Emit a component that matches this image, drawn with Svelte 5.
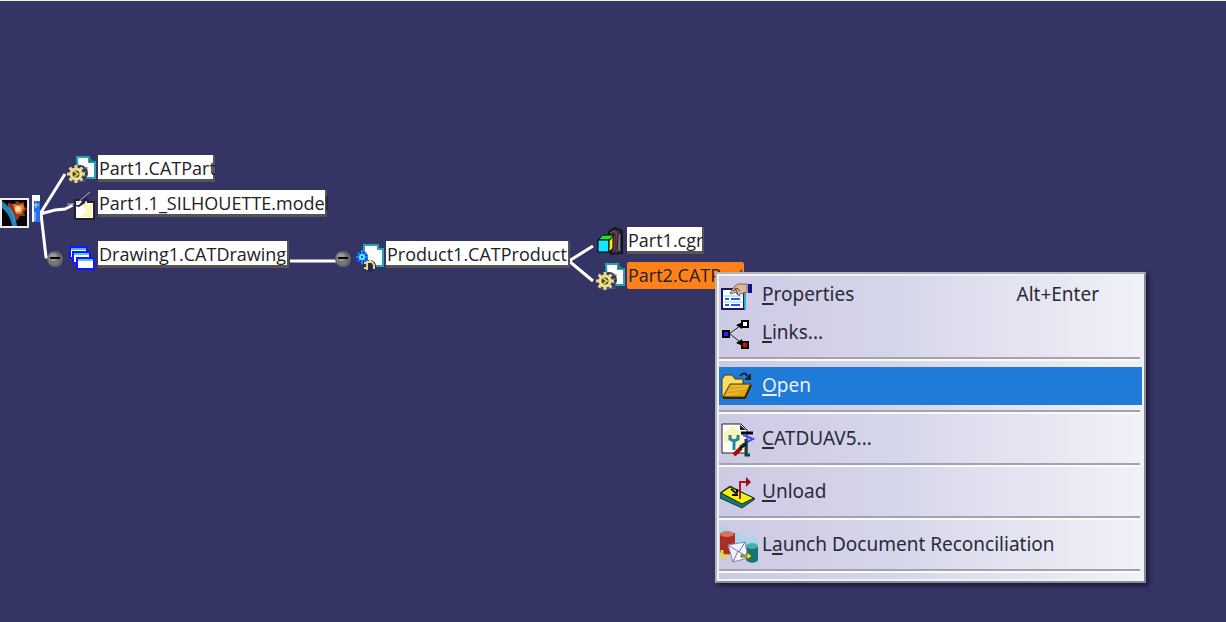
<script>
  const nodes = [
    { label: 'Part1.CATPart', icon: 'part', x: 67, y: 155, w: 117 },
    { label: 'Part1.1_SILHOUETTE.model', icon: 'model', x: 67, y: 190, w: 229 },
    { label: 'Drawing1.CATDrawing', icon: 'drawing', x: 67, y: 241, w: 191 },
    { label: 'Product1.CATProduct', icon: 'product', x: 355, y: 241, w: 184 },
    { label: 'Part1.cgr', icon: 'cgr', x: 596, y: 227, w: 77 },
    { label: 'Part2.CATPart', icon: 'part', x: 596, y: 262, w: 117, selected: true },
  ];
  const groups = [
    [
      { pre: '', key: 'P', rest: 'roperties', icon: 'properties', shortcut: 'Alt+Enter' },
      { pre: '', key: 'L', rest: 'inks...', icon: 'links' },
    ],
    [{ pre: '', key: 'O', rest: 'pen', icon: 'open', active: true }],
    [{ pre: '', key: 'C', rest: 'ATDUAV5...', icon: 'utility' }],
    [{ pre: '', key: 'U', rest: 'nload', icon: 'unload' }],
    [{ pre: 'L', key: 'a', rest: 'unch Document Reconciliation', icon: 'reconcile' }],
  ];
  const hubs = [
    { x: 47, y: 250 },
    { x: 335, y: 250 },
  ];
</script>

{#snippet gear(cx, cy)}
  <g transform="translate({cx} {cy})">
    {#each [0, 45, 90, 135] as a}
      <path d="M0-9V9" stroke="#e8d98a" stroke-width="3" transform="rotate({a})" />
    {/each}
    <circle r="5" fill="#3a3a4a" stroke="#f0df8c" stroke-width="3" />
    <path d="M-2-3L2 0L-2 3" stroke="#d8cf30" stroke-width="2" fill="none" />
  </g>
{/snippet}

{#snippet nodeIcon(name)}
  <svg class="node-icon" viewBox="0 0 30 32" aria-hidden="true">
    {#if name === 'part'}
      <path d="M10 2H22V7H28V23H11Z" fill="#fff" stroke="#22a5b0" stroke-width="2" />
      <path d="M22 2V7H28Z" fill="#187f8c" />
      <circle cx="13" cy="18" r="8" fill="#30305a" />
      <path d="M4 26H19M12 13H21M13 17H21M15 21H20" stroke="#77766f" />
      {@render gear(9, 19)}
    {:else if name === 'model'}
      <path d="M8 10H21V12H27V29H8Z" fill="#fff" stroke="#222" stroke-width="2" />
      <path d="M11 15L20 11V14H25V27H13L20 20Z" fill="#fbf5bb" />
      <path d="M4 15H12L21 4L18 13L12 17Z" fill="#20206f" />
      <path d="M0 14H7M9 14L23 2" stroke="#b9b9d0" stroke-width="1" fill="none" />
    {:else if name === 'drawing'}
      <path d="M3 6H20V17H3Z" fill="#fff" stroke="#1515ff" stroke-width="2" />
      <path d="M4 8H19" stroke="#48b9ff" stroke-width="2" />
      <path d="M6 11H23V22H6Z" fill="#fff" stroke="#1515ff" stroke-width="2" />
      <path d="M7 13H22" stroke="#48c9ff" stroke-width="2" />
      <path d="M10 17H27V28H10Z" fill="#fff" stroke="#1515ff" stroke-width="2" />
      <path d="M11 19H26" stroke="#48c9ff" stroke-width="2" />
    {:else if name === 'product'}
      <path d="M9 4H23V8H28V25H16L9 14Z" fill="#fff" stroke="#22a5b0" stroke-width="2" />
      <circle cx="7" cy="16" r="6" fill="#1636e8" />
      <path d="M7 9V23M1 16H13M3 12L11 20M3 20L11 12" stroke="#158cff" stroke-width="2" />
      <circle cx="7" cy="16" r="2" fill="#061a9a" stroke="#74e6ff" stroke-width="2" />
      <circle cx="15" cy="25" r="6" fill="#28284c" />
      <path d="M9 22H12M12 20V29M12 21H17L19 24V28M9 27H13M15 19V22" stroke="#e8d58b" stroke-width="2" fill="none" />
    {:else if name === 'cgr'}
      <path d="M13 5L19 1L26 4V26L15 27Z" fill="#373444" stroke="#16141c" stroke-width="2" />
      <path d="M14 6L18 4L21 7V25M18 9V22" stroke="#c43a44" stroke-width="1" fill="none" />
      <path d="M22 8L25 5V26L21 23Z" fill="#6c6d8c" stroke="#111" />
      <path d="M2 13L7 8H18L14 13Z" fill="#18e327" stroke="#000" />
      <path d="M2 13H13V25H2Z" fill="#17e5ff" stroke="#000" stroke-width="1" />
      <path d="M13 14L17 9V21L13 25Z" fill="#f6e51b" stroke="#000" />
    {/if}
  </svg>
{/snippet}

{#snippet menuIcon(name)}
  <svg class="menu-icon" viewBox="0 0 40 38" aria-hidden="true">
    {#if name === 'properties'}
      <path d="M2 13H24V33H2Z" fill="#fff" stroke="#171969" stroke-width="2" />
      <path d="M25 13V33" stroke="#22b6cd" stroke-width="2" />
      <path d="M5 23H9M11 23H20M5 29H9M11 29H20" stroke="#3154f5" stroke-width="2" />
      <path d="M4 20H22M4 26H22" stroke="#6fd8ff" />
      <path d="M10 17L14 11L18 8H27V16L20 18L19 20L15 16L12 18Z" fill="#e0b59c" stroke="#766158" />
      <path d="M13 15L17 12L20 15M15 12L18 18" stroke="#4d3e3b" fill="none" />
      <path d="M28 8H32V17H28Z" fill="#12108b" />
    {:else if name === 'links'}
      <path d="M9 20L24 9M10 20L24 31" stroke="#222" stroke-width="1" />
      <path d="M16 11L23 8L22 15ZM16 29L23 32L22 25Z" fill="#000" />
      <path d="M3 17H9V23H3Z" fill="#2525ff" stroke="#000" stroke-width="2" />
      <path d="M22 7H28V13H22Z" fill="#fff" stroke="#000" stroke-width="2" />
      <path d="M22 28H28V34H22Z" fill="#f00505" stroke="#000" stroke-width="2" />
    {:else if name === 'open'}
      <path d="M2 30V12L5 8H12L15 12H23V30Z" fill="#f8dd6b" stroke="#4d3900" stroke-width="1" />
      <path d="M3 30L10 17H31L25 30Z" fill="#dda51c" stroke="#503500" stroke-width="1" />
      <path d="M3 31H25L31 18" stroke="#352800" stroke-width="2" fill="none" />
      <path d="M11 19H28M8 24L26 21M6 28L19 26" stroke="#f1cb46" stroke-width="1" />
      <path d="M20 9C24 4 27 7 29 12M25 12H30V7" stroke="#182338" stroke-width="2" fill="none" />
    {:else if name === 'utility'}
      <path d="M2 4H21L27 10V33H2Z" fill="#fff" stroke="#222" stroke-width="1" />
      <path d="M4 13L13 5L18 11L24 12V31L18 28L12 20L4 24Z" fill="#fbf5bc" />
      <path d="M10 15V19L14 21L18 19V15M14 21V30" stroke="#27859a" stroke-width="3" fill="none" />
      <path d="M20 5V10H26Z" fill="#222" />
      <path d="M21 13H33" stroke="#05051c" stroke-width="3" />
      <path d="M23 15L33 19L22 25" stroke="#4d43ff" stroke-width="2" fill="none" />
      <path d="M26 19V35H30M20 27L27 23" stroke="#173d40" stroke-width="3" fill="none" />
      <path d="M14 35L21 28" stroke="#a80c08" stroke-width="4" />
      <path d="M20 29L26 24" stroke="#111" stroke-width="2" />
    {:else if name === 'unload'}
      <path d="M0 20L10 13L35 26L22 35L0 25Z" fill="#1b7774" stroke="#143d3b" />
      <path d="M1 20L10 14L34 25L22 31Z" fill="#f8f20a" stroke="#172100" />
      <path d="M11 16L17 21M12 22H18M17 16V20" stroke="#111" stroke-width="2" />
      <path d="M20 26V9H27" stroke="#bb1420" stroke-width="2" fill="none" />
      <path d="M26 4L31 9L26 14Z" fill="#990919" />
    {:else if name === 'reconcile'}
      <path d="M0 0C11 2 15 11 38 12V25H0Z" fill="#a9d6e8" />
      <path d="M0 7V26C3 30 14 29 15 24V7Z" fill="#a72d25" />
      <ellipse cx="7" cy="8" rx="7" ry="3" fill="#df6f5b" />
      <path d="M26 20V34C29 38 37 37 38 34V20Z" fill="#137676" />
      <ellipse cx="32" cy="20" rx="6" ry="3" fill="#49adad" />
      <path d="M8 19L25 16L28 32L13 36Z" fill="#f5f5ff" stroke="#8483b7" />
      <path d="M8 19L19 26L25 16M13 36L18 25L28 32" stroke="#7776ad" fill="none" />
      <path d="M2 24V30H8" stroke="#ead63b" stroke-width="3" fill="none" />
      <path d="M21 29H27V26L32 30L27 34V31H21Z" fill="#f4dc3b" stroke="#4d5a21" />
    {/if}
  </svg>
{/snippet}

<main>
  <svg class="wires" width="600" height="300" aria-hidden="true">
    <path d="M40 214L65 174M40 214L55 210L65 209L73 205M41 214L46 257L52 259M290 261H338M569 261L593 246M569 261L593 281" />
  </svg>
  <svg class="root-icon" viewBox="0 0 42 34" aria-hidden="true">
    <path d="M1 5H28V33H1Z" fill="#050507" stroke="#eee" stroke-width="2" />
    <path d="M8 9L14 10L17 7L20 9L24 8L24 12L27 15L24 18L25 22L20 22L17 27L14 22L8 13Z" fill="#8f3a1e" />
    <path d="M13 10L18 11L23 10L24 14L21 20L16 20Z" fill="#e98232" />
    <circle cx="18" cy="15" r="3" fill="#ffdca0" />
    <path d="M2 9C8 12 16 20 17 32H12C11 24 7 18 2 14Z" fill="#2684c4" />
    <path d="M2 8C9 12 14 19 15 27" stroke="#36b7d4" stroke-width="1" fill="none" />
    <path d="M33 2H40V28H33Z" fill="#236ff0" />
    <path d="M32 1H40V7H34V28H32Z" fill="#fff" />
    <path d="M34 11H39M36 9V14M35 18V27" stroke="#b6e6ff" />
  </svg>

  {#each hubs as h}
    <svg class="hub" style="left:{h.x}px;top:{h.y}px" viewBox="0 0 16 16" aria-hidden="true">
      <circle cx="8" cy="8" r="8" fill="#666" />
      <circle cx="7" cy="8" r="6" fill="#777" />
      <circle cx="6" cy="6" r="4" fill="#999" />
      <path d="M3 7H13" stroke="#000" stroke-width="2" />
    </svg>
  {/each}

  {#each nodes as n}
    <div class="node" style="left:{n.x}px;top:{n.y}px">
      {@render nodeIcon(n.icon)}
      <span class="label" class:selected={n.selected} style="width:{n.w}px">{n.label}</span>
    </div>
  {/each}

  <div class="menu" role="menu">
    {#each groups as g}
      <div class="group" role="group">
        {#each g as item}
          <button class:active={item.active} role="menuitem">
            {@render menuIcon(item.icon)}
            <span class="text">{item.pre}<u>{item.key}</u>{item.rest}</span>
            {#if item.shortcut}<span class="shortcut">{item.shortcut}</span>{/if}
          </button>
        {/each}
      </div>
    {/each}
  </div>
</main>

<style>
  :global(body) {
    background: #353565;
  }
  main {
    position: relative;
    min-height: 100vh;
    box-sizing: border-box;
    overflow: hidden;
    border-top: 1px solid #f4f4f8;
    font-family: 'Open Sans', sans-serif;
  }
  .wires,
  .root-icon,
  .hub,
  .node,
  .menu {
    position: absolute;
  }
  .wires {
    left: 0;
    top: -1px;
    fill: none;
    stroke: #fff;
    stroke-width: 3;
  }
  .root-icon {
    left: 0;
    top: 193px;
    width: 42px;
    height: 34px;
  }
  .hub {
    width: 16px;
    height: 16px;
  }
  .node {
    display: flex;
    margin-top: -1px;
    gap: 1px;
  }
  .node-icon {
    width: 30px;
    height: 32px;
  }
  .label {
    height: 27px;
    box-sizing: border-box;
    padding-left: 1px;
    background: #fff;
    border: solid #555;
    border-width: 0 2px 3px 0;
    color: #222;
    font-size: 18px;
    line-height: 26px;
    white-space: nowrap;
  }
  .label.selected {
    background: #ff8119;
    border-color: #ff8119;
    border-radius: 2px;
  }
  .menu {
    left: 715px;
    top: 271px;
    width: 431px;
    box-sizing: border-box;
    padding: 2px;
    border: 2px solid #a0a0a0;
    border-color: #b4b4b8 #8c8c90 #8c8c90 #b4b4b8;
    background: linear-gradient(90deg, #cdcae4, #d5d5ea 40%, #e3e3f1 70%, #f1f1f8);
    box-shadow:
      inset 0 0 0 2px #f3f3f5,
      3px 3px 4px #1c1c40;
  }
  .group::after {
    content: '';
    display: block;
    height: 2px;
    margin: 5px 2px 6px 0;
    background: #a3a3ab;
    border-bottom: 2px solid #fafafc;
  }
  button {
    display: flex;
    align-items: center;
    width: 100%;
    height: 38px;
    padding: 0 43px 0 1px;
    border: 0;
    background: none;
    color: #2a2a38;
    font-family: 'Noto Sans', sans-serif;
    font-size: 19px;
    line-height: 26px;
    text-align: left;
  }
  button.active {
    background: #207ad7;
    color: #e8f0fa;
  }
  .menu-icon {
    flex: none;
    width: 40px;
    height: 38px;
    margin-right: 2px;
  }
  .text {
    flex: 1;
  }
  .text,
  .shortcut {
    padding-bottom: 2px;
  }
  u {
    text-decoration-thickness: 2px;
    text-underline-offset: 2px;
  }
</style>
